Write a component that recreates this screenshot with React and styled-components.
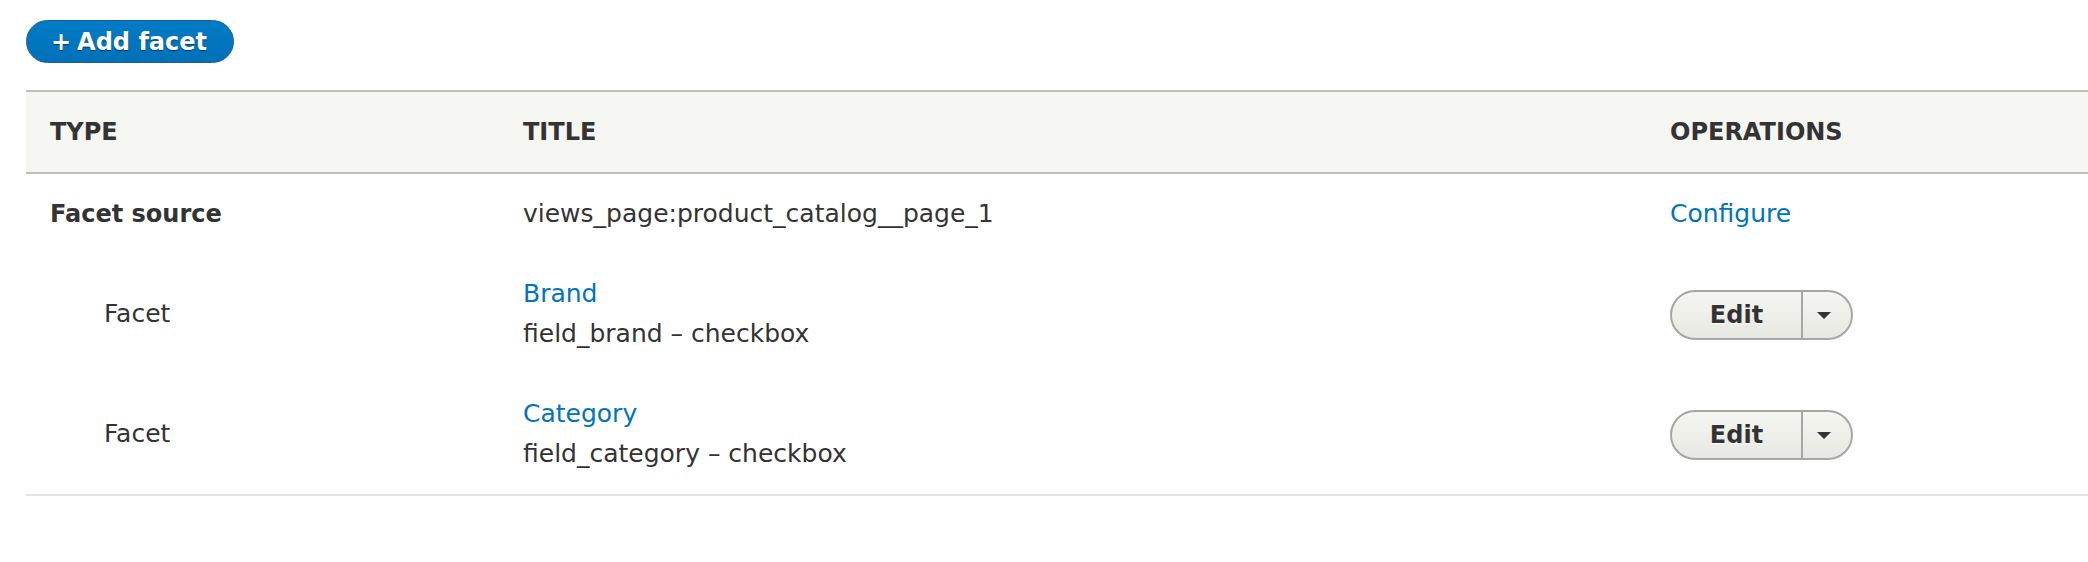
import React from "react";
import styled, { createGlobalStyle } from "styled-components";

const GlobalStyle = createGlobalStyle`
  html, body {
    margin: 0;
    padding: 0;
    background: #fff;
  }
  body {
    font-family: "DejaVu Sans", "Liberation Sans", sans-serif;
    color: #333;
    overflow: hidden;
  }
`;

const Page = styled.div`
  padding: 20px 0 0 26px;
`;

const ActionButton = styled.a`
  display: inline-flex;
  align-items: center;
  height: 43px;
  box-sizing: border-box;
  padding: 0 26px 0 24px;
  background: linear-gradient(to bottom, #007bc6, #0071b8);
  border: 1px solid #1e5c90;
  border-radius: 22px;
  color: #fff;
  font-size: 24px;
  font-weight: 700;
  text-decoration: none;
  text-shadow: 0 1px 1px rgba(0, 0, 0, 0.5);
  &:before {
    content: "+";
    font-weight: 900;
    padding-right: 6px;
  }
`;

const Table = styled.table`
  margin-top: 27px;
  width: calc(100% + 40px);
  border-collapse: collapse;
  font-size: 25px;
  line-height: 40px;
`;

const HeadRow = styled.tr`
  background: #f5f5f2;
  border-top: 2px solid #bfbfba;
  border-bottom: 2px solid #bfbfba;
`;

const Th = styled.th`
  text-align: left;
  padding: 20px 24px;
  font-size: 24px;
  font-weight: 700;
  text-transform: uppercase;
  color: #333;
  width: ${(p) => p.$w || "auto"};
`;

const Row = styled.tr`
  border-bottom: ${(p) => (p.$last ? "2px solid #e6e4df" : "0")};
`;

const Td = styled.td`
  padding: 20px 24px;
  vertical-align: middle;
  font-weight: ${(p) => (p.$bold ? 700 : 400)};
  font-size: ${(p) => (p.$bold ? "24px" : "25px")};
  padding-left: ${(p) => (p.$indent ? "78px" : "24px")};
`;

const Link = styled.a`
  color: #0074bd;
  text-decoration: none;
  display: block;
`;

const Plain = styled.div``;

const DropButton = styled.div`
  display: inline-flex;
  align-items: stretch;
  height: 50px;
  box-sizing: border-box;
  margin-top: 2px;
  border: 2px solid #a6a6a6;
  border-radius: 25px;
  background: linear-gradient(to bottom, #f5f5f1, #e8e8e3);
  overflow: hidden;
  vertical-align: middle;
`;

const DropMain = styled.a`
  display: flex;
  align-items: center;
  justify-content: center;
  width: 129px;
  font-size: 24px;
  font-weight: 700;
  color: #333;
  text-decoration: none;
  text-shadow: 0 1px 0 #fff;
`;

const DropToggle = styled.button`
  display: flex;
  align-items: center;
  justify-content: center;
  width: 50px;
  border: 0;
  border-left: 2px solid #a6a6a6;
  background: transparent;
  padding: 0;
  cursor: pointer;
  &:after {
    content: "";
    border-left: 7px solid transparent;
    border-right: 7px solid transparent;
    border-top: 7px solid #333;
    margin-right: 6px;
  }
`;

const facets = [
  { title: "Brand", detail: "field_brand \u2013 checkbox" },
  { title: "Category", detail: "field_category \u2013 checkbox" },
];

export default function App() {
  return (
    <>
      <GlobalStyle />
      <Page>
        <ActionButton href="#">Add facet</ActionButton>
        <Table>
          <thead>
            <HeadRow>
              <Th $w="425px">Type</Th>
              <Th $w="1099px">Title</Th>
              <Th>Operations</Th>
            </HeadRow>
          </thead>
          <tbody>
            <Row>
              <Td $bold>Facet source</Td>
              <Td>views_page:product_catalog__page_1</Td>
              <Td>
                <Link href="#">Configure</Link>
              </Td>
            </Row>
            {facets.map((f, i) => (
              <Row key={f.title} $last={i === facets.length - 1}>
                <Td $indent>Facet</Td>
                <Td>
                  <Link href="#">{f.title}</Link>
                  <Plain>{f.detail}</Plain>
                </Td>
                <Td>
                  <DropButton>
                    <DropMain href="#">Edit</DropMain>
                    <DropToggle aria-label="List additional actions" />
                  </DropButton>
                </Td>
              </Row>
            ))}
          </tbody>
        </Table>
      </Page>
    </>
  );
}
